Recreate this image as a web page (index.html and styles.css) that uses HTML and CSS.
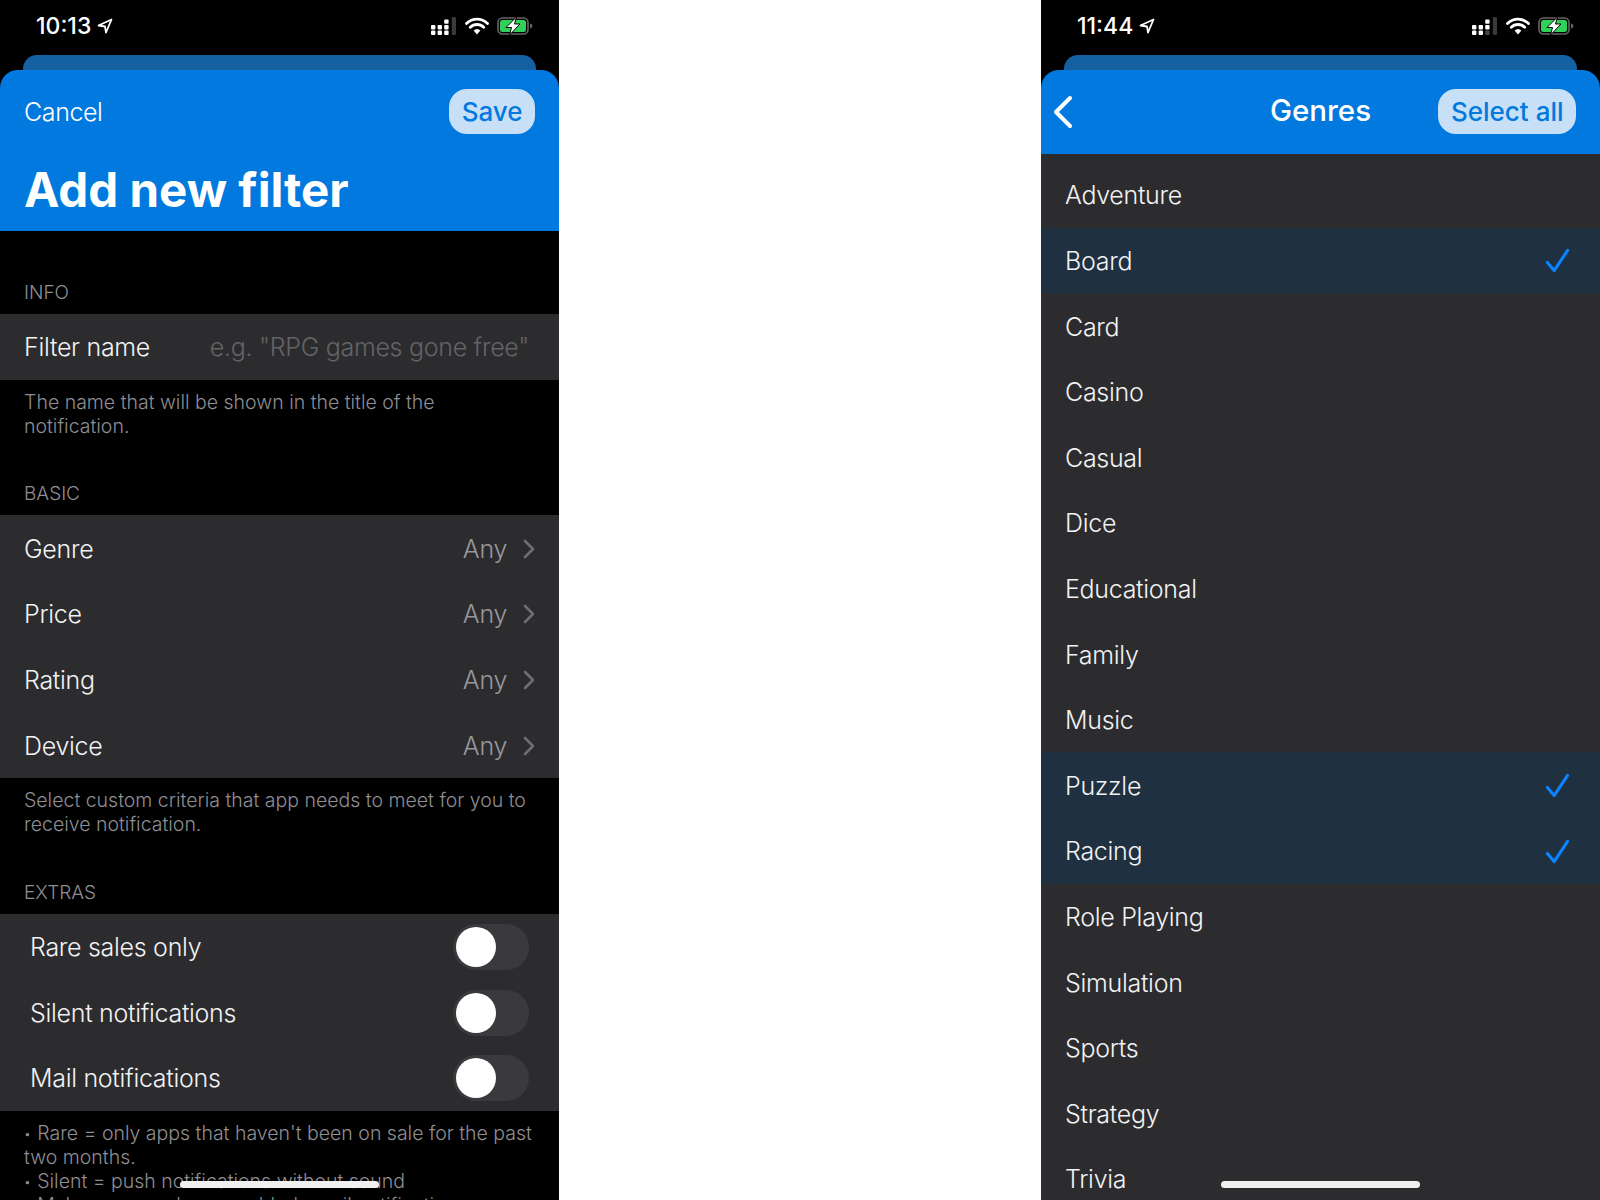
FILE: index.html
```html
<!DOCTYPE html>
<html lang="en">
<head>
    <meta charset="UTF-8">
    <title>Add new filter</title>
    <link rel="stylesheet" href="styles.css">
</head>
<body>
    <div class="screen">
        <div class="status-bar">
            <div class="clock">10:13
                <svg class="arrow" viewBox="0 0 16 16"><path d="M14.5 1.5 1.5 7.5 8 8.5 9 14.5z" fill="none" stroke="#fff" stroke-width="1.8" stroke-linejoin="round"/></svg>
            </div>
            <div class="status-icons">
                <svg class="signal" viewBox="0 0 26 18">
                    <g fill="#fff">
                        <rect x="0" y="8" width="4.4" height="4.4" rx="1"/><rect x="0" y="13.6" width="4.4" height="4.4" rx="1"/>
                        <rect x="6.6" y="8" width="4.4" height="4.4" rx="1"/><rect x="6.6" y="13.6" width="4.4" height="4.4" rx="1"/>
                        <rect x="13.2" y="2.4" width="4.4" height="4.4" rx="1"/><rect x="13.2" y="8" width="4.4" height="4.4" rx="1"/><rect x="13.2" y="13.6" width="4.4" height="4.4" rx="1"/>
                    </g>
                    <rect x="20.8" y="0" width="4.2" height="18" rx="1.2" fill="#3a3a3a"/>
                </svg>
                <svg class="wifi" viewBox="0 0 24 18">
                    <path d="M1.5 6.5a15 15 0 0 1 21 0M5.3 10.2a9.6 9.6 0 0 1 13.4 0" fill="none" stroke="#fff" stroke-width="2.8" stroke-linecap="round"/>
                    <path d="M12 17.5 8.6 13.6a5 5 0 0 1 6.8 0z" fill="#fff"/>
                </svg>
                <svg class="battery" viewBox="0 0 36 18">
                    <rect x="1" y="1" width="30" height="16" rx="4.5" fill="none" stroke="#666" stroke-width="1.6"/>
                    <rect x="3" y="3" width="26" height="12" rx="2.5" fill="#30d158"/>
                    <path d="M33 6.5c1.6.4 2.4 1.3 2.4 2.5s-.8 2.1-2.4 2.5z" fill="#666"/>
                    <path d="M19.5 0 9 10.5h5.5L12.5 18 23 7h-5.5z" fill="#fff" stroke="#000" stroke-width="1"/>
                </svg>
            </div>
        </div>
        <div class="back-card"></div>
        <header class="sheet-header sheet-large">
            <div class="nav-row">
                <span class="cancel">Cancel</span>
                <span class="pill">Save</span>
            </div>
            <h1>Add new filter</h1>
        </header>

        <div class="section-label first">INFO</div>
        <div class="row">
            <span>Filter name</span>
            <span class="placeholder">e.g. "RPG games gone free"</span>
        </div>
        <p class="note">The name that will be shown in the title of the notification.</p>

        <div class="section-label">BASIC</div>
        <div class="row">
            <span>Genre</span>
            <span class="value">Any <svg class="chevron" viewBox="0 0 12 20"><path d="M2 2l8 8-8 8" fill="none" stroke="#6e6e72" stroke-width="2.6" stroke-linecap="round" stroke-linejoin="round"/></svg></span>
        </div>
        <div class="row">
            <span>Price</span>
            <span class="value">Any <svg class="chevron" viewBox="0 0 12 20"><path d="M2 2l8 8-8 8" fill="none" stroke="#6e6e72" stroke-width="2.6" stroke-linecap="round" stroke-linejoin="round"/></svg></span>
        </div>
        <div class="row">
            <span>Rating</span>
            <span class="value">Any <svg class="chevron" viewBox="0 0 12 20"><path d="M2 2l8 8-8 8" fill="none" stroke="#6e6e72" stroke-width="2.6" stroke-linecap="round" stroke-linejoin="round"/></svg></span>
        </div>
        <div class="row">
            <span>Device</span>
            <span class="value">Any <svg class="chevron" viewBox="0 0 12 20"><path d="M2 2l8 8-8 8" fill="none" stroke="#6e6e72" stroke-width="2.6" stroke-linecap="round" stroke-linejoin="round"/></svg></span>
        </div>
        <p class="note">Select custom criteria that app needs to meet for you to receive notification.</p>

        <div class="section-label">EXTRAS</div>
        <div class="row toggle-row">
            <span>Rare sales only</span>
            <span class="toggle"><span class="knob"></span></span>
        </div>
        <div class="row toggle-row">
            <span>Silent notifications</span>
            <span class="toggle"><span class="knob"></span></span>
        </div>
        <div class="row toggle-row">
            <span>Mail notifications</span>
            <span class="toggle"><span class="knob"></span></span>
        </div>
        <p class="note">
            <span class="bullet">•</span> Rare = only apps that haven't been on sale for the past two months.<br>
            <span class="bullet">•</span> Silent = push notifications without sound<br>
            <span class="bullet">•</span> Make sure you have enabled email notifications globally
        </p>
        <div class="home-bar"></div>
    </div>

    <div class="screen">
        <div class="status-bar">
            <div class="clock">11:44
                <svg class="arrow" viewBox="0 0 16 16"><path d="M14.5 1.5 1.5 7.5 8 8.5 9 14.5z" fill="none" stroke="#fff" stroke-width="1.8" stroke-linejoin="round"/></svg>
            </div>
            <div class="status-icons">
                <svg class="signal" viewBox="0 0 26 18">
                    <g fill="#fff">
                        <rect x="0" y="8" width="4.4" height="4.4" rx="1"/><rect x="0" y="13.6" width="4.4" height="4.4" rx="1"/>
                        <rect x="6.6" y="8" width="4.4" height="4.4" rx="1"/><rect x="6.6" y="13.6" width="4.4" height="4.4" rx="1"/>
                        <rect x="13.2" y="2.4" width="4.4" height="4.4" rx="1"/><rect x="13.2" y="8" width="4.4" height="4.4" rx="1"/>
                    </g>
                    <rect x="13.2" y="13.6" width="4.4" height="4.4" rx="1" fill="#444"/>
                    <rect x="20.8" y="0" width="4.2" height="18" rx="1.2" fill="#3a3a3a"/>
                </svg>
                <svg class="wifi" viewBox="0 0 24 18">
                    <path d="M1.5 6.5a15 15 0 0 1 21 0M5.3 10.2a9.6 9.6 0 0 1 13.4 0" fill="none" stroke="#fff" stroke-width="2.8" stroke-linecap="round"/>
                    <path d="M12 17.5 8.6 13.6a5 5 0 0 1 6.8 0z" fill="#fff"/>
                </svg>
                <svg class="battery" viewBox="0 0 36 18">
                    <rect x="1" y="1" width="30" height="16" rx="4.5" fill="none" stroke="#666" stroke-width="1.6"/>
                    <rect x="3" y="3" width="26" height="12" rx="2.5" fill="#30d158"/>
                    <path d="M33 6.5c1.6.4 2.4 1.3 2.4 2.5s-.8 2.1-2.4 2.5z" fill="#666"/>
                    <path d="M19.5 0 9 10.5h5.5L12.5 18 23 7h-5.5z" fill="#fff" stroke="#000" stroke-width="1"/>
                </svg>
            </div>
        </div>
        <div class="back-card"></div>
        <header class="sheet-header nav-only">
            <svg class="back" viewBox="0 0 20 34"><path d="M17 3 3 17l14 14" fill="none" stroke="#fff" stroke-width="4" stroke-linecap="round" stroke-linejoin="round"/></svg>
            <span class="nav-title">Genres</span>
            <span class="pill">Select all</span>
        </header>
        <ul class="genres">
            <li>Adventure</li>
            <li class="selected">Board <svg class="check" viewBox="0 0 26 26"><path d="M2.5 15 9.5 23.5 23.5 2.5" fill="none" stroke="#0a84ff" stroke-width="3.2" stroke-linecap="round" stroke-linejoin="round"/></svg></li>
            <li>Card</li>
            <li>Casino</li>
            <li>Casual</li>
            <li>Dice</li>
            <li>Educational</li>
            <li>Family</li>
            <li>Music</li>
            <li class="selected">Puzzle <svg class="check" viewBox="0 0 26 26"><path d="M2.5 15 9.5 23.5 23.5 2.5" fill="none" stroke="#0a84ff" stroke-width="3.2" stroke-linecap="round" stroke-linejoin="round"/></svg></li>
            <li class="selected">Racing <svg class="check" viewBox="0 0 26 26"><path d="M2.5 15 9.5 23.5 23.5 2.5" fill="none" stroke="#0a84ff" stroke-width="3.2" stroke-linecap="round" stroke-linejoin="round"/></svg></li>
            <li>Role Playing</li>
            <li>Simulation</li>
            <li>Sports</li>
            <li>Strategy</li>
            <li>Trivia</li>
        </ul>
        <div class="home-bar"></div>
    </div>
</body>
</html>
```

FILE: styles.css
```css
:root {
    --blue: #0279de;
    --row-bg: #2c2c2e;
    --selected-bg: #1f3040;
    --muted: #8e8e93;
}

* {
    margin: 0;
    padding: 0;
    box-sizing: border-box;
    font-family: 'Inter', 'Liberation Sans', sans-serif;
}

html, body {
    height: 100vh;
    overflow: hidden;
}

body {
    background-color: white;
    display: flex;
    justify-content: space-between;
}

.screen {
    width: 559px;
    height: 1200px;
    background-color: black;
    color: #f2f2f4;
    position: relative;
    overflow: hidden;
}

.status-bar {
    height: 55px;
    display: flex;
    align-items: center;
    justify-content: space-between;
    padding: 0 26px 4px 36px;
    color: white;
}

.clock {
    font-size: 23px;
    font-weight: 500;
    display: flex;
    align-items: center;
    gap: 6px;
}

.arrow {
    width: 16px;
    height: 16px;
}

.status-icons {
    display: flex;
    align-items: center;
    gap: 8px;
}

.signal {
    width: 26px;
    height: 18px;
}

.wifi {
    width: 24px;
    height: 18px;
}

.battery {
    width: 36px;
    height: 18px;
}

.back-card {
    height: 15px;
    margin: 0 23px;
    background-color: #1560a0;
    border-radius: 14px 14px 0 0;
}

.sheet-header {
    background-color: var(--blue);
    border-radius: 18px 18px 0 0;
    color: white;
}

.sheet-large {
    height: 161px;
    padding: 19px 24px 0;
}

.nav-row {
    display: flex;
    align-items: center;
    justify-content: space-between;
}

.cancel {
    font-size: 25px;
    font-weight: 300;
    letter-spacing: -0.4px;
}

.pill {
    position: relative;
    background-color: #c8e0f7;
    color: var(--blue);
    font-size: 26px;
    font-weight: 500;
    height: 45px;
    line-height: 45px;
    padding: 0 12.5px;
    border-radius: 18px;
}

h1 {
    font-size: 47.5px;
    font-weight: 700;
    line-height: 57px;
    margin-top: 27px;
}

.nav-only {
    height: 84px;
    padding: 0 24px 1px 12px;
    display: flex;
    align-items: center;
    justify-content: space-between;
    position: relative;
}

.back {
    width: 20px;
    height: 34px;
}

.nav-title {
    position: absolute;
    left: 0;
    right: 0;
    top: 22px;
    text-align: center;
    font-size: 29.5px;
    font-weight: 500;
}

.section-label {
    font-size: 19px;
    font-weight: 300;
    color: var(--muted);
    height: 22px;
    line-height: 24px;
    margin: 0 24px 11px;
}

.section-label.first {
    margin-top: 50px;
}

.row {
    height: 65.67px;
    background-color: var(--row-bg);
    font-size: 25px;
    font-weight: 350;
    letter-spacing: -0.3px;
    display: flex;
    align-items: center;
    justify-content: space-between;
    padding: 1px 24px 0;
}

.placeholder {
    color: #636366;
    margin-right: 6px;
}

.value {
    color: #98989d;
    display: flex;
    align-items: center;
    gap: 16px;
}

.chevron {
    width: 12px;
    height: 20px;
}

.toggle-row {
    padding-left: 30px;
}

.toggle {
    width: 76px;
    height: 46px;
    margin-right: 6px;
    background-color: #3a3a3e;
    border-radius: 23px;
    padding: 3px;
    display: flex;
}

.knob {
    width: 40px;
    height: 40px;
    background-color: white;
    border-radius: 50%;
}

.note {
    font-size: 19.5px;
    font-weight: 350;
    line-height: 24px;
    color: var(--muted);
    padding: 10px 24px 0;
    height: 102.7px;
}

.bullet {
    font-size: 12px;
    line-height: 0;
    vertical-align: 2px;
    margin-right: 1px;
}

.genres {
    list-style: none;
}

.genres li {
    height: 65.6px;
    background-color: var(--row-bg);
    font-size: 25px;
    font-weight: 350;
    letter-spacing: -0.3px;
    display: flex;
    align-items: center;
    justify-content: space-between;
    padding: 1px 30px 0 24px;
}

.genres li:first-child {
    height: 73.7px;
    padding-top: 8px;
}

.genres li.selected {
    background-color: var(--selected-bg);
}

.check {
    width: 25px;
    height: 25px;
}

.home-bar {
    position: absolute;
    left: 180px;
    bottom: 12px;
    width: 199px;
    height: 7px;
    background-color: #f0f0f0;
    border-radius: 4px;
}
```
